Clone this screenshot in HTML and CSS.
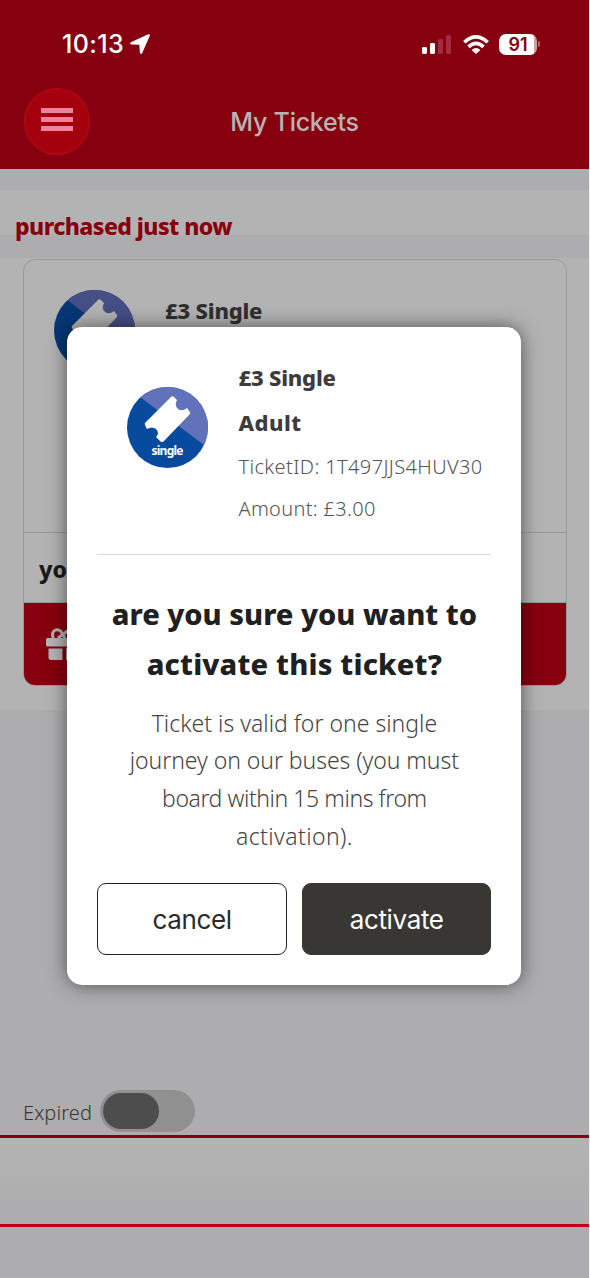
FILE: index.html
```html
<!DOCTYPE html>
<html lang="en">
<head>
<meta charset="utf-8">
<title>My Tickets</title>
<link rel="stylesheet" href="styles.css">
</head>
<body>
<svg class="defs" width="0" height="0" aria-hidden="true">
  <defs>
    <clipPath id="disc"><circle cx="40.5" cy="40.5" r="40.5"/></clipPath>
    <path id="ticket" d="M47 10 50 13Q47 19 51 22Q55 25 60 21L63 25Q64 26 62 28L37 54Q35 56 33 54L29 50Q33 46 29 42Q25 39 20 42L18 38Q17 36 19 35L43 11Q45 8 47 10Z"/>
  </defs>
</svg>
<div class="app">
  <header class="header">
    <div class="status">
      <div class="clock"><span class="time">10:13</span>
        <svg class="arrow" width="20" height="20" viewBox="0 0 20 20"><path d="M18.2.3.9 8.2C-.1 8.7.2 10.6 1.2 10.6L9.3 10.8 9.9 18.8C10 20 11.6 20.3 12.1 19.2L19.7 1.9C20.2.7 19.3-.2 18.2.3Z" fill="#fff"/></svg>
      </div>
      <div class="indicators">
        <svg width="30" height="19" viewBox="0 0 30 19"><g fill="#fff"><rect x="0" y="12" width="5" height="7" rx="1.4"/><rect x="8" y="8" width="5" height="11" rx="1.4"/></g><g fill="#a62b40"><rect x="16" y="4" width="5" height="15" rx="1.4"/><rect x="24" y="0" width="5" height="19" rx="1.4"/></g></svg>
        <svg class="wifi" width="26" height="19" viewBox="0 0 26 19"><g fill="none" stroke="#fff" stroke-width="3.6"><path d="M1.3 7.3Q13-3.6 24.7 7.3"/><path d="M5.5 11.8Q13 5 20.5 11.8"/></g><path d="M8.6 14.9Q13 11.2 17.4 14.9L13 19Z" fill="#fff"/></svg>
        <div class="battery"><span>91</span></div><i class="battery-cap"></i>
      </div>
    </div>
    <div class="nav">
      <div class="menu"><i></i><i></i><i></i></div>
      <div class="title"><span>My Tickets</span></div>
    </div>
  </header>
  <main class="content">
    <h2 class="purchased"><span>purchased just now</span></h2>
    <section class="list">
      <div class="card">
        <div class="card-top">
          <svg width="81" height="81" viewBox="0 0 81 81"><g clip-path="url(#disc)"><path fill="#053775" d="M0 0H81V81H0Z"/><path fill="#454f85" d="M13 10 81 61V0H13Z"/></g><use href="#ticket" fill="#b3b3b3"/></svg>
          <b class="card-name">£3 Single</b>
        </div>
        <div class="card-row"><span>yo</span></div>
        <div class="card-gift"><svg width="32" height="33" viewBox="0 0 32 33"><g fill="#b3b3b3"><rect x="0" y="10" width="32" height="8.5" rx="1.5"/><path d="M2.5 20.5H16.5V32H5Q2.5 32 2.5 30ZM20 20.5H30V32H20Z"/></g><path d="M7.5 10C3.5 2 13-1 16 5L19 10M12 10 20 4Q26-1 28 6L24 10" fill="none" stroke="#b3b3b3" stroke-width="3"/></svg></div>
      </div>
    </section>
    <div class="filter"><span class="expired">Expired</span><div class="switch"><i></i></div></div>
  </main>
  <footer class="footer"><div class="tabs"></div></footer>

  <div class="modal" role="dialog">
    <div class="summary">
      <svg width="81" height="81" viewBox="0 0 81 81"><g clip-path="url(#disc)"><path fill="#084a9e" d="M0 0H81V81H0Z"/><path fill="#6272ba" d="M13 10 81 61V0H13Z"/></g><use href="#ticket" fill="#fff"/><text class="badge-text" x="40.5" y="68" text-anchor="middle" textLength="32">single</text></svg>
      <div class="details">
        <b class="name">£3 Single</b>
        <b class="adult">Adult</b>
        <span class="tid">TicketID: 1T497JJS4HUV30</span>
        <span class="amount">Amount: £3.00</span>
      </div>
    </div>
    <div class="question"><span class="q1">are you sure you want to</span><span class="q2">activate this ticket?</span></div>
    <div class="terms"><span class="t1">Ticket is valid for one single</span><span class="t2">journey on our buses (you must</span><span class="t3">board within 15 mins from</span><span class="t4">activation).</span></div>
    <div class="actions"><button class="btn"><span>cancel</span></button><button class="btn dark"><span>activate</span></button></div>
  </div>
</div>
</body>
</html>
```
FILE: styles.css
```css
*{box-sizing:border-box}
body{margin:0;background:#f0f0f0;font-family:"Noto Sans",sans-serif}
svg{flex:none}
.defs{position:absolute}
.app{position:relative;width:589px;height:1278px;background:#adadaf;overflow:hidden;display:flex;flex-direction:column;white-space:nowrap}
.header{height:169px;background:#86000f;flex:none}
.status{height:88px;padding:0 49px 0 62px;display:flex;justify-content:space-between;align-items:center;font-family:"Inter",sans-serif}
.clock{display:flex;align-items:center;gap:6px;color:#fff;font-size:25px;font-weight:500;letter-spacing:.4px}
.indicators{display:flex;align-items:center}
.wifi{margin:0 10px 0 11px}
.battery{width:38px;height:21px;border-radius:7px;background:linear-gradient(90deg,#fff 35px,#d99ca4 35px);color:#86000f;font-weight:600;font-size:18px;line-height:21px;text-align:center}
.battery-cap{width:2px;height:6px;margin-left:1px;background:#bd6875;border-radius:0 2px 2px 0}
.nav{height:81px;display:flex;padding-left:24px}
.menu{width:66px;height:67px;border-radius:50%;background:#a4000e;border:1px solid #b90a1c;display:flex;flex-direction:column;align-items:center;justify-content:center;gap:4px;padding-bottom:4px}
.menu i{width:32px;height:5px;background:#ef819c}
.title{width:409px;text-align:center;font:500 25px/68px "Inter",sans-serif;letter-spacing:-.25px;color:#b8b3b3}
.content{flex:1}
.purchased{margin:21px 0 23px;height:45px;padding-left:15px;background:#b3b3b3;color:#86000f;font:800 23px/73px "Noto Sans",sans-serif;letter-spacing:-.57px}
.list{height:452px;background:#b3b3b3;padding:1px 23px 0}
.card{height:427px;width:544px;border:1px solid #999;border-radius:12px;overflow:hidden}
.card-top{height:273px;border-bottom:1px solid #999;padding:30px 0 0 30px;display:flex;gap:30px}
.card-name{font-size:22px;line-height:41px;font-weight:800;letter-spacing:-.2px;color:#2f2f2f}
.card-row{height:70px;padding-left:15px;font-weight:800;font-size:23px;line-height:73px;color:#1a1a1a;border-bottom:1px solid #999}
.card-gift{height:83px;background:#86000f;padding:25px 22px}
.filter{display:flex;align-items:center;height:43px;margin-top:380px;padding-left:23px;gap:9px;font-size:20px;font-weight:300;color:#353535}
.expired{width:68px;padding-top:1px;letter-spacing:.1px}
.switch{width:95px;height:42px;margin-bottom:1px;border-radius:21px;background:#909091;padding:3px}
.switch i{display:block;width:56px;height:36px;border-radius:18px;background:#4d4d4d}
.footer{height:143px;flex:none;border-top:3px solid #86000f;background:linear-gradient(#b3b3b3,#adadaf 85px)}
.tabs{height:89px;border-bottom:3px solid #c20014}
.modal{position:absolute;left:67.4px;top:327px;width:454px;height:658px;border-radius:15px;background:#fff;box-shadow:0 0 19px rgba(0,0,0,.55);padding:0 30px 30px}
.summary{height:228px;border-bottom:1.5px solid #dadada;display:flex;padding:60px 0 0 30px;gap:30px}
.details{display:flex;flex-direction:column;margin-top:-32px;align-items:flex-start}
.details b{font-weight:800;font-size:22px;color:#3c3c3c;line-height:45px;height:45px}
.details span{font-size:20px;font-weight:300;color:#555;line-height:44px;height:42px}
.details .name{letter-spacing:-.2px}
.details .adult{letter-spacing:.5px}
.details .tid{letter-spacing:.38px}
.details .amount{letter-spacing:.33px}
.badge-text{font:700 12px "Noto Sans",sans-serif;fill:#fff}
.question,.terms{display:flex;flex-direction:column;align-items:center}
.question{margin-top:34px;font-size:29px;font-weight:800;line-height:50px;color:#202020}
.q2{letter-spacing:.18px}
.terms{margin-top:15.5px;font-size:23px;font-weight:300;line-height:37.7px;color:#444}
.t2{letter-spacing:-.06px}
.t3{letter-spacing:-.43px}
.t4{letter-spacing:.4px}
.actions{display:flex;gap:15px;margin-top:27.7px}
.btn{width:189.5px;height:72px;border:1.5px solid #222;border-radius:9px;background:#fff;padding:0;color:#2a2a2a;font:400 26px "Inter",sans-serif;letter-spacing:-.35px}
.dark{background:#393734;color:#fff;border-color:#393734}
```
